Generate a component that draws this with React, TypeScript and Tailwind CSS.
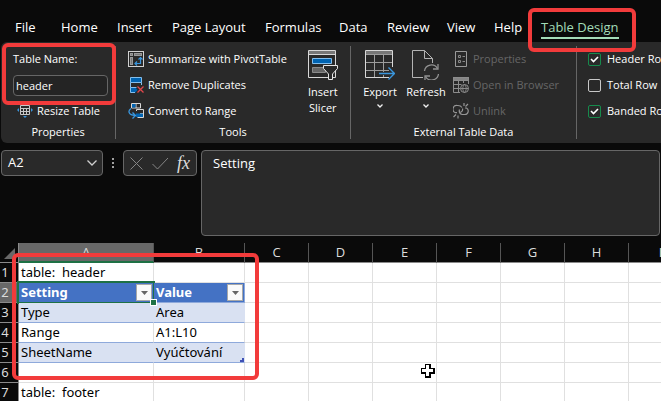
import React from 'react';

const tabs: { label: string; width: string; active?: boolean }[] = [
  { label: 'File', width: 'w-[46px]' },
  { label: 'Home', width: 'w-14' },
  { label: 'Insert', width: 'w-[55px]' },
  { label: 'Page Layout', width: 'w-[93px]' },
  { label: 'Formulas', width: 'w-[74px]' },
  { label: 'Data', width: 'w-12' },
  { label: 'Review', width: 'w-[60px]' },
  { label: 'View', width: 'w-[47px]' },
  { label: 'Help', width: 'w-[47px]' },
  { label: 'Table Design', width: 'w-[76px]', active: true },
];

function PivotIcon() {
  return (
    <svg width="16" height="16" viewBox="0 0 16 16" fill="none" shapeRendering="crispEdges" className="shrink-0">
      <rect x="0.5" y="0.5" width="15" height="15" stroke="#d0d0d0" />
      <path d="M2.5 2.5h2v2h-2zM6.5 2.5h7v2h-7zM2.5 6.5h2v7h-2z" fill="#777" stroke="#999" />
      <g shapeRendering="auto" stroke="#3a96dd" strokeWidth="1.2">
        <path d="M8 12.5h4.500V7" />
        <path d="M10.500 8.500l2-2 2 2M9 10.500l-2 2 2 2" />
      </g>
    </svg>
  );
}

function DuplicatesIcon() {
  return (
    <svg width="16" height="16" viewBox="0 0 16 16" fill="none" className="shrink-0">
      <path d="M2.500 .5h11v5h-11z" fill="#0063b1" stroke="#83beec" />
      <path d="M2.500 5.500v5M13.500 5.500V8M2.500 10.500h6" stroke="#83beec" />
      <path d="M2.500 10.500h5l2 2.500-2 2.500h-5z" fill="#0063b1" />
      <path d="M8 10.500H2.500v5H7" stroke="#83beec" />
      <path d="M9.500 9.500l6 6M15.500 9.500l-6 6" stroke="#e0474c" strokeWidth="1.3" />
    </svg>
  );
}

function ConvertIcon() {
  return (
    <svg width="16" height="16" viewBox="0 0 16 16" fill="none" className="shrink-0">
      <path d="M3.500 5V.5h9v4.500H3.500M8 .5V5" stroke="#d8d8d8" />
      <path d="M4 1h3.500v3.500H4z" fill="#0063b1" />
      <path d="M8.500 8V6.500h7v8h-6M12 10.500h3.500" stroke="#d8d8d8" />
      <path d="M8 10.500h7V14H8z" fill="#0063b1" />
      <path d="M3 5.500C-.5 8 .5 12 7 12.500M4.500 9.500l3 3-3 3" stroke="#3a96dd" strokeWidth="1.3" />
    </svg>
  );
}

function ResizeIcon() {
  return (
    <svg width="16" height="16" viewBox="0 0 16 16" fill="none" className="shrink-0">
      <path d="M3.500 2.500h9v9h-9zM3.500 5.500h9M3.500 8.500h9M6.500 5.500v6M9.500 5.500v6" stroke="#c8c8c8" />
      <path d="M0 7l2-2v4zM16 7l-2-2v4zM6 13h4l-2 2z" fill="#3a96dd" />
    </svg>
  );
}

function SlicerIcon() {
  return (
    <svg width="30" height="30" viewBox="0 0 30 30" fill="none" className="shrink-0">
      <path d="M.5.5h27v27H.5z" stroke="#d8d8d8" />
      <path d="M1 1h26v3H1z" fill="#777" />
      <path d="M1 4.500h26" stroke="#d8d8d8" />
      <path d="M4.500 8.500h19v5h-19z" fill="#0063b1" stroke="#83beec" />
      <path d="M4.500 17.500h13v5h-13z" fill="#666" stroke="#8a8a8a" />
      <path d="M15.500 15.500h14v3l-5 5.500v5.500h-4V24l-5-5.500z" fill="#292929" stroke="#e4e4e4" />
    </svg>
  );
}

function ExportIcon() {
  return (
    <svg width="30" height="30" viewBox="0 0 30 30" fill="none" className="shrink-0">
      <path d="M1 1h26v3H1z" fill="#777" />
      <path d="M.5 4.500h27M.5 12.500h27M.5 20.500h27M9.500 4.500v23M18.500 4.500v23" stroke="#9c9c9c" />
      <path d="M.5.5h27v27H.5z" stroke="#d8d8d8" />
      <path d="M14 22h13v3H14zM24 17h4v13h-4z" fill="#292929" />
      <path d="M14 23.500h15M23.500 17.500l6 6-6 6" stroke="#3a96dd" strokeWidth="1.4" />
    </svg>
  );
}

function RefreshIcon() {
  return (
    <svg width="28" height="30" viewBox="0 0 28 30" fill="none" className="shrink-0">
      <path d="M11 27.500H.5V.5h12l8 8V13M12.500.5v8h8" stroke="#b4b4b4" />
      <path d="M12.500 21a7 7 0 0 1 13-2.500M26.500 24a7 7 0 0 1-13 2.500" stroke="#929292" strokeWidth="1.3" />
      <path d="M26 14v5h-5M13 30.500V26h5" stroke="#929292" strokeWidth="1.3" />
    </svg>
  );
}

function PropertiesIcon() {
  return (
    <svg width="16" height="16" viewBox="0 0 16 16" fill="none" className="shrink-0">
      <path d="M2.500.5h11v15h-11z" stroke="#9a9a9a" />
      <path d="M5.500 4.500h2v2h-2zM5.500 9.500h2v2h-2zM9.500 5.500H12M9.500 10.500H12" stroke="#8a8a8a" />
    </svg>
  );
}

function BrowserIcon() {
  return (
    <svg width="16" height="16" viewBox="0 0 16 16" fill="none" className="shrink-0">
      <path d="M0 0h16v3H0z" fill="#858585" />
      <path d="M7 15.500H.5V.5h15V7M.5 3.500h15M.5 7.500h8M.5 11.500H7M5.500 3.500v12M10.500 3.500V6" stroke="#8c8c8c" />
      <circle cx="11.500" cy="11.500" r="4" fill="#292929" stroke="#8c8c8c" />
      <path d="M7.500 11.500h8M11.500 7.500c-2.300 2.500-2.300 5.500 0 8M11.500 7.500c2.300 2.500 2.300 5.500 0 8" stroke="#8c8c8c" />
    </svg>
  );
}

function UnlinkIcon() {
  return (
    <svg width="16" height="16" viewBox="0 0 16 16" fill="none" stroke="#959595" strokeWidth="1.200" className="shrink-0">
      <path d="M9 4.500C8 3 7 2.500 5 2.500H4a3.700 3.700 0 0 0-1.500 7.200H4M6.500 6.500c-1 3 1 5 3 5H12a3.500 3.500 0 0 0 1.500-6.500H12M6 9.500c2.500 0 4-1.500 3.500-4" />
      <path d="M11 0v3M15 1l-2.500 2.500M5 12.500v3M3 11.500L.5 14" />
    </svg>
  );
}

function Chevron() {
  return (
    <svg width="6" height="4" viewBox="0 0 6 4" fill="none" className="mt-1">
      <path d="M.5.5L3 3 5.500.5" stroke="#f0f0f0" strokeWidth="1.300" />
    </svg>
  );
}

function Tool({ icon, label, disabled = false }: { icon: React.ReactNode; label: string; disabled?: boolean }) {
  return (
    <button
      type="button"
      disabled={disabled}
      className="flex h-[26px] items-center gap-1 whitespace-nowrap text-white disabled:text-[#666666]"
    >
      {icon}
      {label}
    </button>
  );
}

function Group({ title, className, children }: { title: string; className: string; children: React.ReactNode }) {
  return (
    <section className={`my-1 flex shrink-0 flex-col border-r border-[#666666] ${className}`}>
      <div className="flex h-[78px]">{children}</div>
      <h2 className="text-center leading-4">{title}</h2>
    </section>
  );
}

function Check({ label, checked = false }: { label: string; checked?: boolean }) {
  return (
    <label className="flex h-[26px] items-center gap-1.5 whitespace-nowrap">
      <span className="relative flex">
        <input
          type="checkbox"
          defaultChecked={checked}
          className="peer size-[13px] appearance-none rounded-xs border border-[#c8c8c8] checked:border-[#168a4c]"
        />
        <svg
          width="13"
          height="13"
          viewBox="0 0 13 13"
          fill="none"
          className="pointer-events-none absolute inset-0 hidden peer-checked:block"
        >
          <path d="M3 6l2.500 2.500L10 4" stroke="#fff" strokeWidth="1.600" />
        </svg>
      </span>
      {label}
    </label>
  );
}

function Ribbon() {
  return (
    <div className="ml-px flex h-[101px] shrink-0 overflow-hidden rounded-l-md bg-[#292929] text-[11px] text-white">
      <Group title="Properties" className="w-[115px]">
        <div className="flex flex-col pl-3">
          <label htmlFor="table-name" className="flex h-[26px] items-center">
            Table Name:
          </label>
          <div className="flex h-[26px] items-center">
            <input
              id="table-name"
              defaultValue="header"
              className="h-[21px] w-[95px] rounded-sm border border-[#666666] bg-[#242424] px-0.5"
            />
          </div>
          <div className="pl-1">
            <Tool icon={<ResizeIcon />} label="Resize Table" />
          </div>
        </div>
      </Group>
      <Group title="Tools" className="w-[235px]">
        <div className="flex flex-1 flex-col pl-3">
          <Tool icon={<PivotIcon />} label="Summarize with PivotTable" />
          <Tool icon={<DuplicatesIcon />} label="Remove Duplicates" />
          <Tool icon={<ConvertIcon />} label="Convert to Range" />
        </div>
        <button type="button" className="flex w-[58px] flex-col items-start pt-1 pl-4 leading-4">
          <SlicerIcon />
          <span className="pt-1">
            Insert
            <br />
            Slicer
          </span>
        </button>
      </Group>
      <Group title="External Table Data" className="w-[226px]">
        <div className="flex pl-1.5">
          <button type="button" className="flex w-[46px] flex-col items-center pt-1 leading-4">
            <ExportIcon />
            <span className="pt-1">Export</span>
            <Chevron />
          </button>
          <button type="button" className="flex w-[46px] flex-col items-center pt-1 leading-4">
            <RefreshIcon />
            <span className="pt-1">Refresh</span>
            <Chevron />
          </button>
        </div>
        <div className="flex flex-col pl-1">
          <Tool icon={<PropertiesIcon />} label="Properties" disabled />
          <Tool icon={<BrowserIcon />} label="Open in Browser" disabled />
          <Tool icon={<UnlinkIcon />} label="Unlink" disabled />
        </div>
      </Group>
      <div className="my-1 shrink-0 pl-[11px]">
        <Check label="Header Row" checked />
        <Check label="Total Row" />
        <Check label="Banded Rows" checked />
      </div>
    </div>
  );
}

function FormulaBar() {
  return (
    <div className="flex shrink-0 items-start px-px pt-[7px] text-[13px] text-white">
      <button
        type="button"
        aria-label="Name box"
        className="flex h-[26px] w-[102px] shrink-0 items-center justify-between rounded-sm border border-[#666666] bg-[#292929] pr-1 pl-1.5"
      >
        A2
        <svg width="12" height="8" viewBox="0 0 12 8" fill="none">
          <path d="M1.500 1.500L6 6l4.500-4.500" stroke="#d0d0d0" strokeWidth="1.300" />
        </svg>
      </button>
      <svg width="20" height="26" viewBox="0 0 20 26" fill="#a0a0a0" className="shrink-0">
        <path d="M9 8h2v2H9zM9 12h2v2H9zM9 16h2v2H9z" />
      </svg>
      <div className="flex h-[26px] w-[74px] shrink-0 items-center justify-between rounded-sm border border-[#666666] bg-[#292929] px-1.5">
        <button type="button" aria-label="Cancel">
          <svg width="13" height="13" viewBox="0 0 13 13" fill="none">
            <path d="M.5.5l12 12M12.500.5l-12 12" stroke="#858585" />
          </svg>
        </button>
        <button type="button" aria-label="Enter">
          <svg width="17" height="13" viewBox="0 0 17 13" fill="none">
            <path d="M.5 7l5 5L16 1" stroke="#858585" />
          </svg>
        </button>
        <button
          type="button"
          aria-label="Insert function"
          className="font-['Liberation_Serif',serif] text-lg leading-5 text-[#dddddd] italic"
        >
          fx
        </button>
      </div>
      <textarea
        aria-label="Formula"
        defaultValue="Setting"
        className="ml-1 h-[86px] min-w-0 flex-1 resize-none rounded-sm border border-[#666666] bg-[#292929] px-[11px] py-1 leading-4"
      />
    </div>
  );
}

const moreColumns = ['C', 'D', 'E', 'F', 'G', 'H', 'I'];
const rows: [string, string][] = [
  ['table:  header', ''],
  ['Setting', 'Value'],
  ['Type', 'Area'],
  ['Range', 'A1:L10'],
  ['SheetName', 'Vyúčtování'],
  ['', ''],
  ['table:  footer', ''],
];

function FilterButton({ label }: { label: string }) {
  return (
    <button
      type="button"
      aria-label={label}
      className="flex h-[17px] w-4 shrink-0 items-center justify-center border border-[#a8a8a8] bg-[#fafafa]"
    >
      <svg width="7" height="4" viewBox="0 0 7 4" fill="#666">
        <path d="M0 0h7L3.500 4z" />
      </svg>
    </button>
  );
}

function cellStyle(row: number) {
  if (row === 2) return 'border-b-[#8ea9db] bg-[#4472c4] font-bold text-white border-r-[#8ea9db]';
  if (row === 3 || row === 5) return 'border-b-[#8ea9db] bg-[#d9e1f2] border-r-[#d9e1f2]';
  if (row === 4) return 'border-b-[#8ea9db] border-r-[#e0e0e0]';
  return 'border-[#e0e0e0]';
}

function Sheet() {
  return (
    <div className="mt-[7px] min-h-0 flex-1 overflow-hidden bg-white">
      <table className="w-max table-fixed border-separate border-spacing-0 text-[13px] leading-[19px] text-black">
        <colgroup>
          <col className="w-[19px]" />
          <col className="w-[135px]" />
          <col className="w-[91px]" />
          {moreColumns.map((c) => (
            <col key={c} className="w-16" />
          ))}
        </colgroup>
        <thead className="bg-[#0a0a0a] text-[#dcdcdc]">
          <tr className="h-5">
            <th className="border-r border-b border-[#8a8a8a] p-0">
              <svg width="18" height="19" viewBox="0 0 18 19" fill="#686868">
                <path d="M15 5v11H4z" />
              </svg>
            </th>
            <th className="border-r border-b-2 border-r-[#555555] border-b-[#1e7145] bg-[#686868] p-0 leading-[18px] font-normal">
              A
            </th>
            {['B', ...moreColumns].map((c) => (
              <th key={c} className="border-r border-b border-r-[#555555] border-b-[#8a8a8a] p-0 font-normal">
                {c}
              </th>
            ))}
          </tr>
        </thead>
        <tbody className="font-['Noto_Sans',sans-serif]">
          {rows.map(([a, b], i) => {
            const n = i + 1;
            const inTable = n >= 2 && n <= 5;
            return (
              <tr key={n} className="h-5">
                <th
                  scope="row"
                  className={`border-r border-b border-[#8a8a8a] p-0 pr-2 font-normal text-[#dcdcdc] ${n === 2 ? 'bg-[#686868]' : 'bg-[#0a0a0a]'}`}
                >
                  {n}
                </th>
                <td className={`relative border-r border-b p-0 pl-0.5 whitespace-pre ${cellStyle(n)}`}>
                  {n === 2 ? (
                    <div className="flex h-[19px] items-center justify-between pr-px">
                      {a}
                      <FilterButton label="Filter Setting" />
                      <span className="pointer-events-none absolute -inset-0.5 border-2 border-[#1e7145]" />
                      <span className="absolute -right-[3px] -bottom-[3px] z-10 size-[5px] bg-[#1e7145] outline outline-white" />
                    </div>
                  ) : (
                    a
                  )}
                </td>
                <td
                  className={`relative border-r border-b p-0 pl-0.5 whitespace-pre ${cellStyle(n)} ${inTable ? 'border-r-[#8ea9db]' : ''}`}
                >
                  {n === 2 ? (
                    <div className="flex h-[19px] items-center justify-between pr-px">
                      {b}
                      <FilterButton label="Filter Value" />
                    </div>
                  ) : (
                    b
                  )}
                  {n === 5 && (
                    <svg width="4" height="4" viewBox="0 0 4 4" fill="#3f51b5" className="absolute right-0 bottom-0">
                      <path d="M2 0h2v4H0V2h2z" />
                    </svg>
                  )}
                </td>
                {moreColumns.map((c) => (
                  <td key={c} className="border-r border-b border-[#e0e0e0] p-0" />
                ))}
              </tr>
            );
          })}
        </tbody>
      </table>
    </div>
  );
}

function Highlight({ className }: { className: string }) {
  return <div className={`pointer-events-none absolute z-20 rounded-md border-4 border-[#f23b3b] ${className}`} />;
}

export default function App() {
  return (
    <main className="relative flex h-screen flex-col overflow-hidden bg-[#0a0a0a] font-['Open_Sans',sans-serif]">
      <nav className="flex h-[42px] shrink-0 items-end pb-[3px] pl-[15px] text-[13px] text-white">
        {tabs.map((t) => (
          <div key={t.label} className={`shrink-0 ${t.width}`}>
            <button
              type="button"
              className={`border-b-2 leading-5 whitespace-nowrap ${t.active ? 'border-[#a3dcb8] text-[#a3dcb8]' : 'border-transparent'}`}
            >
              {t.label}
            </button>
          </div>
        ))}
      </nav>
      <Ribbon />
      <FormulaBar />
      <Sheet />
      <Highlight className="top-[43px] left-0.5 h-[62px] w-[114px]" />
      <Highlight className="top-2 left-[528px] h-11 w-[108px]" />
      <Highlight className="top-[253px] left-3 h-[127px] w-[247px]" />
      <svg
        width="16"
        height="16"
        viewBox="0 0 16 16"
        shapeRendering="crispEdges"
        className="pointer-events-none absolute top-[363px] left-[420px]"
      >
        <path d="M5 1h6v4h4v6h-4v4H5v-4H1V5h4z" fill="#000" />
        <path d="M5 1h4v4h4v4H9v4H5V9H1V5h4z" fill="#fff" stroke="#000" />
      </svg>
    </main>
  );
}
